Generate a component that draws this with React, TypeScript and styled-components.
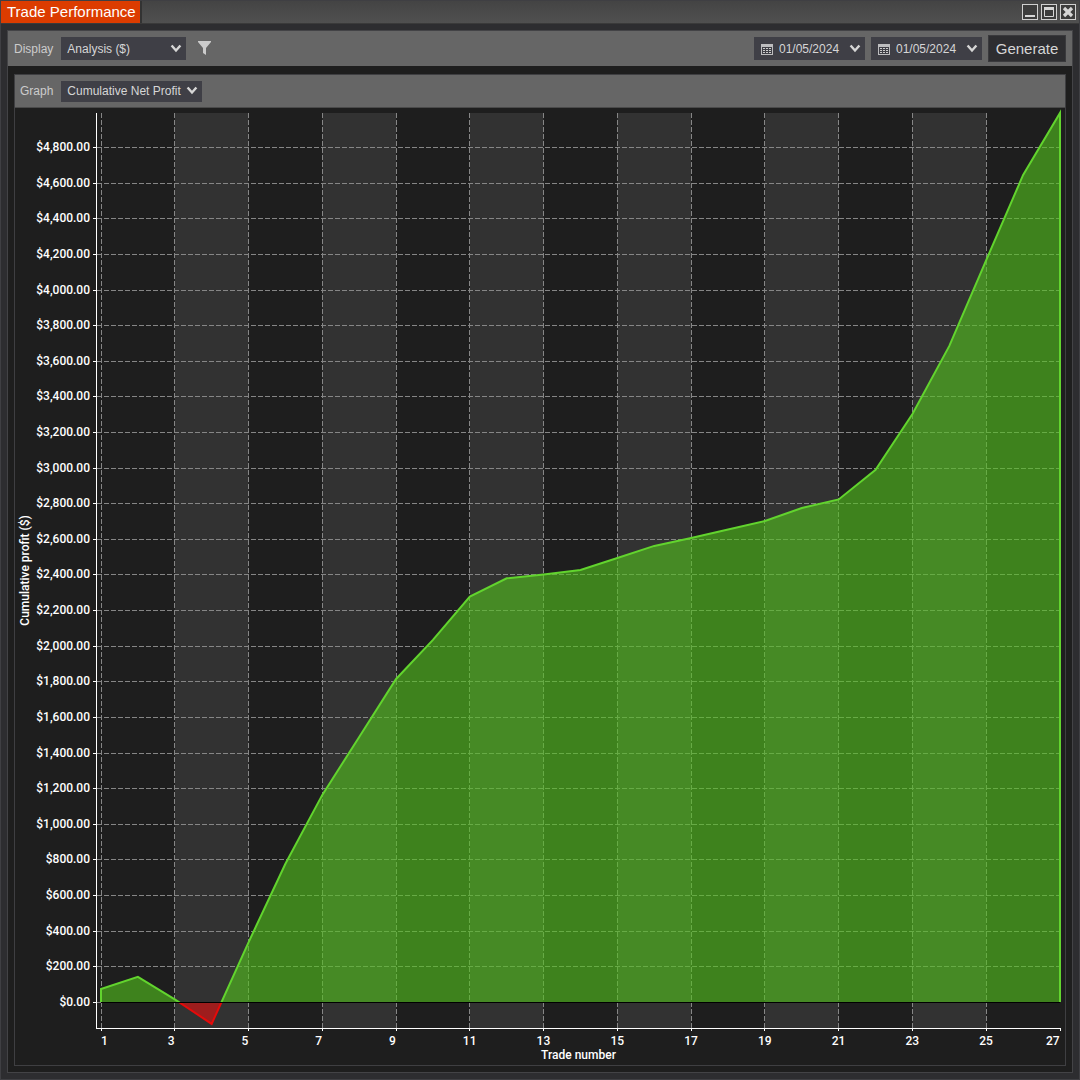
import React, { useLayoutEffect, useRef, useState } from "react";
import styled, { createGlobalStyle } from "styled-components";

const GlobalStyle = createGlobalStyle`
  * { box-sizing: border-box; }
  body { margin: 0; background: #2d2d30; font-family: "Liberation Sans", Arial, sans-serif; }
  button, select { font-family: inherit; }
`;

const Window = styled.div`
  display: flex;
  flex-direction: column;
  min-height: 100vh;
  border: 1px solid #3f3f43;
  background: #2d2d30;
  color: #cccccc;
`;

const TitleBar = styled.header`
  display: flex;
  align-items: center;
  justify-content: space-between;
  height: 23px;
  padding-right: 3px;
  background: linear-gradient(#444444, #505050);
  border-bottom: 1px solid #3a3a3a;
`;

const Title = styled.h1`
  margin: 0;
  padding: 0 4px 0 6px;
  height: 22px;
  line-height: 22px;
  font-size: 15px;
  font-weight: 400;
  color: #ffffff;
  background: #dc3c00;
  box-shadow: 2px 0 0 #333333;
`;

const WindowControls = styled.div`
  display: flex;
  gap: 3px;
`;

const WindowButton = styled.button`
  display: block;
  width: 16px;
  height: 16px;
  padding: 0;
  border: 1px solid #d0d0d0;
  background: #3c3c3c;
  color: #d6d6d6;

  svg { display: block; }
`;

const Panel = styled.main`
  flex: 1;
  display: flex;
  flex-direction: column;
  margin: 6px;
  border: 1px solid #434346;
  background: #1e1e1e;
`;

const Toolbar = styled.div`
  display: flex;
  align-items: center;
  gap: 6px;
  height: 35px;
  padding: 0 6px;
  background: #666666;
`;

const GraphPanel = styled.section`
  flex: 1;
  display: flex;
  flex-direction: column;
  margin: 8px 6px 6px;
  border: 1px solid #3f3f42;
`;

const GraphToolbar = styled(Toolbar)`
  height: 33px;
  padding: 0 5px;
  border-bottom: 1px solid #4a4a4a;
`;

const Label = styled.label`
  margin-right: 2px;
  font-size: 12px;
  line-height: 16px;
`;

const SelectBox = styled.div<{ $width: number; $height: number }>`
  position: relative;
  width: ${(p) => p.$width}px;
  height: ${(p) => p.$height}px;
`;

const Select = styled.select<{ $inset?: number }>`
  appearance: none;
  display: block;
  width: 100%;
  height: 100%;
  padding: 0 16px 0 ${(p) => p.$inset ?? 6}px;
  border: 0;
  border-radius: 0;
  background: #3f3f46;
  color: #d6d6d6;
  font-size: 12px;
`;

const Chevron = styled.svg`
  position: absolute;
  right: 4px;
  top: 50%;
  margin-top: -5px;
  pointer-events: none;
`;

const Calendar = styled.svg`
  position: absolute;
  left: 7px;
  top: 50%;
  margin-top: -5px;
  pointer-events: none;
`;

const FilterButton = styled.button`
  display: flex;
  margin-left: 6px;
  padding: 0;
  border: 0;
  background: none;
  color: #cccccc;
`;

const Spacer = styled.div`
  flex: 1;
`;

const GenerateButton = styled.button`
  width: 78px;
  height: 27px;
  padding: 0;
  border: 1px solid #3a3a3d;
  background: #2d2d30;
  color: #d6d6d6;
  font-size: 15px;
`;

const ChartSvg = styled.svg`
  display: block;
  flex: 1 1 360px;
  width: 100%;
  min-height: 0;
`;

const AxisText = styled.text`
  fill: #ffffff;
  font-family: Roboto, "Liberation Sans", sans-serif;
  font-size: 12px;
  font-weight: 500;
`;

function DropDown(props: {
  id: string;
  options: string[];
  width: number;
  height: number;
  label?: string;
  calendar?: boolean;
}) {
  return (
    <SelectBox $width={props.width} $height={props.height}>
      <Select id={props.id} aria-label={props.label} $inset={props.calendar ? 25 : 6}>
        {props.options.map((o) => (
          <option key={o}>{o}</option>
        ))}
      </Select>
      {props.calendar && (
        <Calendar width="12" height="11" viewBox="0 0 12 11" aria-hidden="true">
          <path d="M0 0h12v11H0z" fill="#bdbdbf" />
          <path d="M1 3h10v7H1z" fill="#3f3f46" />
          <path d="M2 4.5h8M2 6.5h8M2 8.5h8" stroke="#cccccc" strokeDasharray="2 1" />
        </Calendar>
      )}
      <Chevron width="12" height="9" viewBox="0 0 12 9" aria-hidden="true">
        <path d="M1.6 1.5L6 6.5l4.4-5" fill="none" stroke="#d6d6d6" strokeWidth="2.4" />
      </Chevron>
    </SelectBox>
  );
}

const profits = [
  75, 143, 17, -121, 337, 778, 1165, 1490, 1816, 2035, 2279, 2381, 2403, 2428, 2495, 2563, 2608, 2655, 2703,
  2776, 2824, 2990, 3304, 3686, 4168, 4646, 4994,
];
const MIN_VALUE = -144;
const MAX_VALUE = 4994;
const LABEL_WIDTH = 14;
const money = new Intl.NumberFormat("en-US", { style: "currency", currency: "USD" });

function ProfitChart() {
  const ref = useRef<SVGSVGElement>(null);
  const [size, setSize] = useState({ width: 1050, height: 957 });

  useLayoutEffect(() => {
    const node = ref.current;
    if (!node) return;
    const measure = () => {
      const box = node.getBoundingClientRect();
      setSize({ width: box.width, height: box.height });
    };
    measure();
    const observer = new ResizeObserver(measure);
    observer.observe(node);
    return () => observer.disconnect();
  }, []);

  const axisX = 82;
  const left = 86;
  const right = size.width - 5;
  const top = 5;
  const bottom = size.height - 37;
  const x = (trade: number) => left + ((trade - 1) * (right - left)) / (profits.length - 1);
  const y = (value: number) => bottom - ((value - MIN_VALUE) * (bottom - top)) / (MAX_VALUE - MIN_VALUE);
  const snap = (n: number) => Math.floor(n) + 0.5;
  const zero = Math.round(y(0));

  const trades = Array.from({ length: 14 }, (_, i) => 1 + i * 2);
  const levels = Array.from({ length: 25 }, (_, i) => i * 200);
  const line = profits.map((p, i) => `${x(i + 1)},${y(p)}`).join(" ");
  const outline = `${x(1)},${zero} ${line} ${x(profits.length)},${zero}`;

  return (
    <ChartSvg ref={ref} role="img" aria-label="Cumulative profit by trade number">
      <defs>
        <clipPath id="gain">
          <rect x="0" y="0" width={size.width} height={zero} />
        </clipPath>
        <clipPath id="loss">
          <rect x="0" y={zero} width={size.width} height={size.height} />
        </clipPath>
      </defs>
      {trades.slice(0, -1).map(
        (t, i) =>
          i % 2 === 1 && (
            <rect key={t} x={x(t)} y={top} width={x(t + 2) - x(t)} height={bottom - top} fill="#323232" />
          ),
      )}
      <g stroke="#868686" strokeDasharray="5 2" shapeRendering="crispEdges">
        {trades.slice(0, -1).map((t) => (
          <line key={t} x1={snap(x(t))} x2={snap(x(t))} y1={top} y2={bottom} />
        ))}
        {levels.map((v) => (
          <line key={v} x1={axisX} x2={right} y1={snap(y(v))} y2={snap(y(v))} />
        ))}
      </g>
      <g clipPath="url(#gain)">
        <polygon points={outline} fill="#54c41c" fillOpacity="0.6" />
        <polyline points={outline} fill="none" stroke="#62d42e" strokeWidth="2" />
      </g>
      <g clipPath="url(#loss)">
        <polygon points={outline} fill="#cc1414" fillOpacity="0.7" />
        <polyline points={line} fill="none" stroke="#e60a0a" strokeWidth="2" />
      </g>
      <line x1={left} x2={right} y1={snap(y(0))} y2={snap(y(0))} stroke="#000000" />
      <g stroke="#ffffff" shapeRendering="crispEdges">
        <line x1={axisX - 0.5} x2={axisX - 0.5} y1={top} y2={bottom + 1} />
        <line x1={axisX - 1} x2={right + 1} y1={bottom + 0.5} y2={bottom + 0.5} />
        {trades.map((t) => (
          <line key={t} x1={snap(x(t))} x2={snap(x(t))} y1={bottom} y2={bottom + 3} />
        ))}
        {levels.map((v) => (
          <line key={v} x1={axisX - 4} x2={axisX} y1={snap(y(v))} y2={snap(y(v))} />
        ))}
      </g>
      {levels.map((v) => (
        <AxisText key={v} x={axisX - 7} y={Math.floor(y(v)) + 4} textAnchor="end">
          {money.format(v)}
        </AxisText>
      ))}
      {trades.map((t) => (
        <AxisText
          key={t}
          x={Math.min(Math.max(x(t) - LABEL_WIDTH / 2, left), right - LABEL_WIDTH)}
          y={bottom + 17}
        >
          {t}
        </AxisText>
      ))}
      <AxisText x={(axisX + right) / 2} y={bottom + 31} textAnchor="middle">
        Trade number
      </AxisText>
      <AxisText transform={`translate(14 ${(top + bottom) / 2}) rotate(-90)`} textAnchor="middle">
        Cumulative profit ($)
      </AxisText>
    </ChartSvg>
  );
}

export default function App() {
  return (
    <>
      <GlobalStyle />
      <Window>
        <TitleBar>
          <Title>Trade Performance</Title>
          <WindowControls>
            <WindowButton aria-label="Minimize">
              <svg width="14" height="14" viewBox="0 0 14 14">
                <path d="M2 10h10v2H2z" fill="currentColor" />
              </svg>
            </WindowButton>
            <WindowButton aria-label="Maximize">
              <svg width="14" height="14" viewBox="0 0 14 14">
                <path d="M2.5 3.5h9v8h-9z" fill="none" stroke="currentColor" />
                <path d="M2 2h10v3H2z" fill="currentColor" />
              </svg>
            </WindowButton>
            <WindowButton aria-label="Close">
              <svg width="14" height="14" viewBox="0 0 14 14">
                <path d="M3 3l8 8M11 3l-8 8" stroke="currentColor" strokeWidth="3.2" />
              </svg>
            </WindowButton>
          </WindowControls>
        </TitleBar>
        <Panel>
          <Toolbar>
            <Label htmlFor="display">Display</Label>
            <DropDown id="display" options={["Analysis ($)"]} width={125} height={23} />
            <FilterButton aria-label="Filter">
              <svg width="13" height="15" viewBox="0 0 13 15">
                <path d="M0 0h13v1L8 7v7L5 12V7L0 1z" fill="currentColor" />
              </svg>
            </FilterButton>
            <Spacer />
            <DropDown id="from" label="Start date" options={["01/05/2024"]} width={111} height={23} calendar />
            <DropDown id="to" label="End date" options={["01/05/2024"]} width={111} height={23} calendar />
            <GenerateButton>Generate</GenerateButton>
          </Toolbar>
          <GraphPanel>
            <GraphToolbar>
              <Label htmlFor="graph">Graph</Label>
              <DropDown id="graph" options={["Cumulative Net Profit"]} width={141} height={21} />
            </GraphToolbar>
            <ProfitChart />
          </GraphPanel>
        </Panel>
      </Window>
    </>
  );
}
